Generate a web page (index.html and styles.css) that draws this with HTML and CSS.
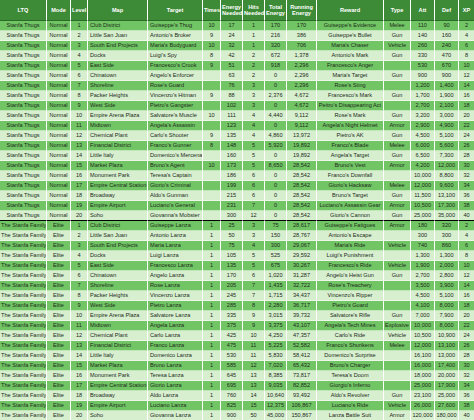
FILE: index.html
```html
<!DOCTYPE html>
<html>
<head>
<meta charset="utf-8">
<link rel="stylesheet" href="styles.css">
</head>
<body>
<table class="sheet">
<colgroup>
<col style="width:47px"><col style="width:24px"><col style="width:17px"><col style="width:60px"><col style="width:55px"><col style="width:18px"><col style="width:22px"><col style="width:22px"><col style="width:22px"><col style="width:30px"><col style="width:67px"><col style="width:27px"><col style="width:24px"><col style="width:24px"><col style="width:15px">
</colgroup>
<thead>
<tr class="head"><th>LTQ</th><th>Mode</th><th>Level</th><th>Map</th><th>Target</th><th>Times</th><th>Energy Needed</th><th>Hits Needed</th><th>Total Energy</th><th>Running Energy</th><th>Reward</th><th>Type</th><th>Att</th><th>Def</th><th>XP</th></tr>
</thead>
<tbody>
<tr class="d"><td>Stanfa Thugs</td><td>Normal</td><td>1</td><td class="l">Club District</td><td class="l">Guiseppe's Thug</td><td>10</td><td>17</td><td>1</td><td>170</td><td>170</td><td>Guiseppe's Evidence</td><td>Melee</td><td>110</td><td>90</td><td>2</td></tr>
<tr class="p"><td>Stanfa Thugs</td><td>Normal</td><td>2</td><td class="l">Little San Juan</td><td class="l">Antonio's Broker</td><td>9</td><td>24</td><td>1</td><td>216</td><td>386</td><td>Guiseppe's Bullet</td><td>Gun</td><td>140</td><td>160</td><td>4</td></tr>
<tr class="d"><td>Stanfa Thugs</td><td>Normal</td><td>3</td><td class="l">South End Projects</td><td class="l">Maria's Bodyguard</td><td>10</td><td>32</td><td>1</td><td>320</td><td>706</td><td>Maria's Chaser</td><td>Vehicle</td><td>260</td><td>240</td><td>6</td></tr>
<tr class="p"><td>Stanfa Thugs</td><td>Normal</td><td>4</td><td class="l">Docks</td><td class="l">Luigi's Spy</td><td>8</td><td>42</td><td>2</td><td>672</td><td>1,378</td><td>Antonio's Mark</td><td>Gun</td><td>330</td><td>470</td><td>8</td></tr>
<tr class="d"><td>Stanfa Thugs</td><td>Normal</td><td>5</td><td class="l">East Side</td><td class="l">Francesco's Crook</td><td>9</td><td>51</td><td>2</td><td>918</td><td>2,296</td><td>Francesco's Anger</td><td></td><td>530</td><td>670</td><td>10</td></tr>
<tr class="p"><td>Stanfa Thugs</td><td>Normal</td><td>6</td><td class="l">Chinatown</td><td class="l">Angelo's Enforcer</td><td></td><td>63</td><td>2</td><td>0</td><td>2,296</td><td>Maria's Target</td><td>Gun</td><td>900</td><td>900</td><td>12</td></tr>
<tr class="d"><td>Stanfa Thugs</td><td>Normal</td><td>7</td><td class="l">Shoreline</td><td class="l">Rose's Guard</td><td></td><td>76</td><td>3</td><td>0</td><td>2,296</td><td>Rose's Sting</td><td></td><td>1,200</td><td>1,400</td><td>14</td></tr>
<tr class="p"><td>Stanfa Thugs</td><td>Normal</td><td>8</td><td class="l">Packer Heights</td><td class="l">Vincenzo's Hitman</td><td>9</td><td>88</td><td>3</td><td>2,376</td><td>4,672</td><td>Francesco's Mark</td><td>Gun</td><td>1,700</td><td>1,900</td><td>16</td></tr>
<tr class="d"><td>Stanfa Thugs</td><td>Normal</td><td>9</td><td class="l">West Side</td><td class="l">Pietro's Gangster</td><td></td><td>102</td><td>3</td><td>0</td><td>4,672</td><td>Peitro's Disappearing Act</td><td></td><td>2,700</td><td>2,100</td><td>18</td></tr>
<tr class="p"><td>Stanfa Thugs</td><td>Normal</td><td>10</td><td class="l">Empire Arena Plaza</td><td class="l">Salvatore's Muscle</td><td>10</td><td>111</td><td>4</td><td>4,440</td><td>9,112</td><td>Rose's Mark</td><td>Gun</td><td>3,200</td><td>3,000</td><td>20</td></tr>
<tr class="d"><td>Stanfa Thugs</td><td>Normal</td><td>11</td><td class="l">Midtown</td><td class="l">Angela's Assassin</td><td></td><td>123</td><td>4</td><td>0</td><td>9,112</td><td>Angela's Night Helmet</td><td>Armor</td><td>2,900</td><td>4,900</td><td>22</td></tr>
<tr class="p"><td>Stanfa Thugs</td><td>Normal</td><td>12</td><td class="l">Chemical Plant</td><td class="l">Carlo's Shooter</td><td>9</td><td>135</td><td>4</td><td>4,860</td><td>13,972</td><td>Pietro's AK</td><td>Gun</td><td>4,500</td><td>5,100</td><td>24</td></tr>
<tr class="d"><td>Stanfa Thugs</td><td>Normal</td><td>13</td><td class="l">Financial District</td><td class="l">Franco's Gunner</td><td>8</td><td>148</td><td>5</td><td>5,920</td><td>19,892</td><td>Franco's Blade</td><td>Melee</td><td>6,000</td><td>5,600</td><td>26</td></tr>
<tr class="p"><td>Stanfa Thugs</td><td>Normal</td><td>14</td><td class="l">Little Italy</td><td class="l">Domenico's Mercenary</td><td></td><td>160</td><td>5</td><td>0</td><td>19,892</td><td>Angela's Target</td><td>Gun</td><td>6,500</td><td>7,300</td><td>28</td></tr>
<tr class="d"><td>Stanfa Thugs</td><td>Normal</td><td>15</td><td class="l">Market Plaza</td><td class="l">Bruno's Agent</td><td>10</td><td>173</td><td>5</td><td>8,650</td><td>28,542</td><td>Bruno's Vest</td><td>Armor</td><td>4,200</td><td>12,000</td><td>30</td></tr>
<tr class="p"><td>Stanfa Thugs</td><td>Normal</td><td>16</td><td class="l">Monument Park</td><td class="l">Teresa's Captain</td><td></td><td>186</td><td>6</td><td>0</td><td>28,542</td><td>Franco's Downfall</td><td></td><td>10,000</td><td>8,800</td><td>32</td></tr>
<tr class="d"><td>Stanfa Thugs</td><td>Normal</td><td>17</td><td class="l">Empire Central Station</td><td class="l">Giorio's Criminal</td><td></td><td>199</td><td>6</td><td>0</td><td>28,542</td><td>Giorio's Hacksaw</td><td>Melee</td><td>12,000</td><td>9,600</td><td>34</td></tr>
<tr class="p"><td>Stanfa Thugs</td><td>Normal</td><td>18</td><td class="l">Broadway</td><td class="l">Aldo's Gunman</td><td></td><td>215</td><td>6</td><td>0</td><td>28,542</td><td>Bruno's Target</td><td>Gun</td><td>11,500</td><td>13,100</td><td>36</td></tr>
<tr class="d"><td>Stanfa Thugs</td><td>Normal</td><td>19</td><td class="l">Empire Airport</td><td class="l">Luciano's General</td><td></td><td>231</td><td>7</td><td>0</td><td>28,542</td><td>Luciano's Assassin Gear</td><td>Armor</td><td>10,500</td><td>17,300</td><td>38</td></tr>
<tr class="p last"><td>Stanfa Thugs</td><td>Normal</td><td>20</td><td class="l">Soho</td><td class="l">Giovanna's Mobster</td><td></td><td>300</td><td>12</td><td>0</td><td>28,542</td><td>Giorio's Cannon</td><td>Gun</td><td>25,000</td><td>35,000</td><td>40</td></tr>
<tr class="d"><td>The Stanfa Family</td><td>Elite</td><td>1</td><td class="l">Club District</td><td class="l">Guiseppe Lanza</td><td>1</td><td>25</td><td>3</td><td>75</td><td>28,617</td><td>Guiseppe's Fatigues</td><td>Armor</td><td>180</td><td>320</td><td>2</td></tr>
<tr class="p"><td>The Stanfa Family</td><td>Elite</td><td>2</td><td class="l">Little San Juan</td><td class="l">Antonio Lanza</td><td>1</td><td>50</td><td>3</td><td>150</td><td>28,767</td><td>Antonio's Escape</td><td></td><td>300</td><td>300</td><td>4</td></tr>
<tr class="d"><td>The Stanfa Family</td><td>Elite</td><td>3</td><td class="l">South End Projects</td><td class="l">Maria Lanza</td><td>1</td><td>75</td><td>4</td><td>300</td><td>29,067</td><td>Maria's Ride</td><td>Vehicle</td><td>740</td><td>860</td><td>6</td></tr>
<tr class="p"><td>The Stanfa Family</td><td>Elite</td><td>4</td><td class="l">Docks</td><td class="l">Luigi Lanza</td><td>1</td><td>105</td><td>5</td><td>525</td><td>29,592</td><td>Luigi's Punishment</td><td></td><td>1,300</td><td>1,300</td><td>8</td></tr>
<tr class="d"><td>The Stanfa Family</td><td>Elite</td><td>5</td><td class="l">East Side</td><td class="l">Francesco Lanza</td><td>1</td><td>135</td><td>5</td><td>675</td><td>30,267</td><td>Francesco's Ride</td><td>Vehicle</td><td>1,900</td><td>2,000</td><td>10</td></tr>
<tr class="p"><td>The Stanfa Family</td><td>Elite</td><td>6</td><td class="l">Chinatown</td><td class="l">Angelo Lanza</td><td>1</td><td>170</td><td>6</td><td>1,020</td><td>31,287</td><td>Angelo's Heist Gun</td><td>Gun</td><td>2,700</td><td>2,800</td><td>12</td></tr>
<tr class="d"><td>The Stanfa Family</td><td>Elite</td><td>7</td><td class="l">Shoreline</td><td class="l">Rose Lanza</td><td>1</td><td>205</td><td>7</td><td>1,435</td><td>32,722</td><td>Rose's Treachery</td><td></td><td>3,500</td><td>3,900</td><td>14</td></tr>
<tr class="p"><td>The Stanfa Family</td><td>Elite</td><td>8</td><td class="l">Packer Heights</td><td class="l">Vincenzo Lanza</td><td>1</td><td>245</td><td>7</td><td>1,715</td><td>34,437</td><td>Vincenzo's Ripper</td><td></td><td>4,500</td><td>5,100</td><td>16</td></tr>
<tr class="d"><td>The Stanfa Family</td><td>Elite</td><td>9</td><td class="l">West Side</td><td class="l">Pietro Lanza</td><td>1</td><td>285</td><td>8</td><td>2,280</td><td>36,717</td><td>Pietro's Guard</td><td></td><td>4,100</td><td>8,000</td><td>18</td></tr>
<tr class="p"><td>The Stanfa Family</td><td>Elite</td><td>10</td><td class="l">Empire Arena Plaza</td><td class="l">Salvatore Lanza</td><td>1</td><td>335</td><td>9</td><td>3,015</td><td>39,732</td><td>Salvatore's Rifle</td><td>Gun</td><td>7,000</td><td>7,900</td><td>20</td></tr>
<tr class="d"><td>The Stanfa Family</td><td>Elite</td><td>11</td><td class="l">Midtown</td><td class="l">Angela Lanza</td><td>1</td><td>375</td><td>9</td><td>3,375</td><td>43,107</td><td>Angela's Tech Mines</td><td>Explosive</td><td>10,000</td><td>8,000</td><td>22</td></tr>
<tr class="p"><td>The Stanfa Family</td><td>Elite</td><td>12</td><td class="l">Chemical Plant</td><td class="l">Carlo Lanza</td><td>1</td><td>425</td><td>10</td><td>4,250</td><td>47,357</td><td>Carlo's Ride</td><td>Vehicle</td><td>10,500</td><td>10,900</td><td>24</td></tr>
<tr class="d"><td>The Stanfa Family</td><td>Elite</td><td>13</td><td class="l">Financial District</td><td class="l">Franco Lanza</td><td>1</td><td>475</td><td>11</td><td>5,225</td><td>52,582</td><td>Franco's Shurikens</td><td>Melee</td><td>12,000</td><td>13,100</td><td>26</td></tr>
<tr class="p"><td>The Stanfa Family</td><td>Elite</td><td>14</td><td class="l">Little Italy</td><td class="l">Domenico Lanza</td><td>1</td><td>530</td><td>11</td><td>5,830</td><td>58,412</td><td>Domenico's Surprise</td><td></td><td>16,100</td><td>13,000</td><td>28</td></tr>
<tr class="d"><td>The Stanfa Family</td><td>Elite</td><td>15</td><td class="l">Market Plaza</td><td class="l">Bruno Lanza</td><td>1</td><td>585</td><td>12</td><td>7,020</td><td>65,432</td><td>Bruno's Charger</td><td></td><td>16,000</td><td>17,400</td><td>30</td></tr>
<tr class="p"><td>The Stanfa Family</td><td>Elite</td><td>16</td><td class="l">Monument Park</td><td class="l">Teresa Lanza</td><td>1</td><td>645</td><td>13</td><td>8,385</td><td>73,817</td><td>Teresa's Doom</td><td></td><td>18,000</td><td>20,000</td><td>32</td></tr>
<tr class="d"><td>The Stanfa Family</td><td>Elite</td><td>17</td><td class="l">Empire Central Station</td><td class="l">Giorio Lanza</td><td>1</td><td>695</td><td>13</td><td>9,035</td><td>82,852</td><td>Giorgio's Inferno</td><td></td><td>25,000</td><td>17,900</td><td>34</td></tr>
<tr class="p"><td>The Stanfa Family</td><td>Elite</td><td>18</td><td class="l">Broadway</td><td class="l">Aldo Lanza</td><td>1</td><td>760</td><td>14</td><td>10,640</td><td>93,492</td><td>Aldo's Revolver</td><td>Gun</td><td>23,100</td><td>25,000</td><td>36</td></tr>
<tr class="d"><td>The Stanfa Family</td><td>Elite</td><td>19</td><td class="l">Empire Airport</td><td class="l">Luciano Lanza</td><td>1</td><td>825</td><td>15</td><td>12,375</td><td>106,867</td><td>Luciano's Ride</td><td>Vehicle</td><td>26,000</td><td>27,600</td><td>38</td></tr>
<tr class="p"><td>The Stanfa Family</td><td>Elite</td><td>20</td><td class="l">Soho</td><td class="l">Giovanna Lanza</td><td>1</td><td>900</td><td>50</td><td>45,000</td><td>150,867</td><td>Lanza Battle Suit</td><td>Armor</td><td>120,000</td><td>180,000</td><td>40</td></tr>
</tbody>
</table>
</body>
</html>
```

FILE: styles.css
```css
html, body {
  margin: 0;
  padding: 0;
  background: #d7efcf;
  overflow: hidden;
}
.sheet {
  table-layout: fixed;
  width: 474px;
  border-collapse: separate;
  border-spacing: 0;
  font-family: "Liberation Sans", Arial, sans-serif;
  font-size: 5.6px;
  color: #1c2a1a;
}
.sheet th, .sheet td {
  padding: 0 1px;
  overflow: hidden;
  white-space: nowrap;
  text-align: center;
  border-right: 1px solid #ffffff;
  box-sizing: border-box;
}
.sheet th:last-child, .sheet td:last-child {
  border-right: none;
}
.head th {
  height: 21px;
  background: #3d8b37;
  color: #ffffff;
  font-weight: bold;
  white-space: normal;
  line-height: 6.5px;
  border-bottom: 1px solid #2b6a28;
}
.sheet td {
  height: 10px;
  line-height: 9px;
  border-bottom: 1px solid rgba(255,255,255,0.55);
}
.sheet td.l {
  text-align: left;
  padding-left: 2px;
}
.d td {
  background: #72c565;
}
.p td {
  background: #d7efcf;
}
.last td {
  border-bottom: 1px solid #000000;
}
```
